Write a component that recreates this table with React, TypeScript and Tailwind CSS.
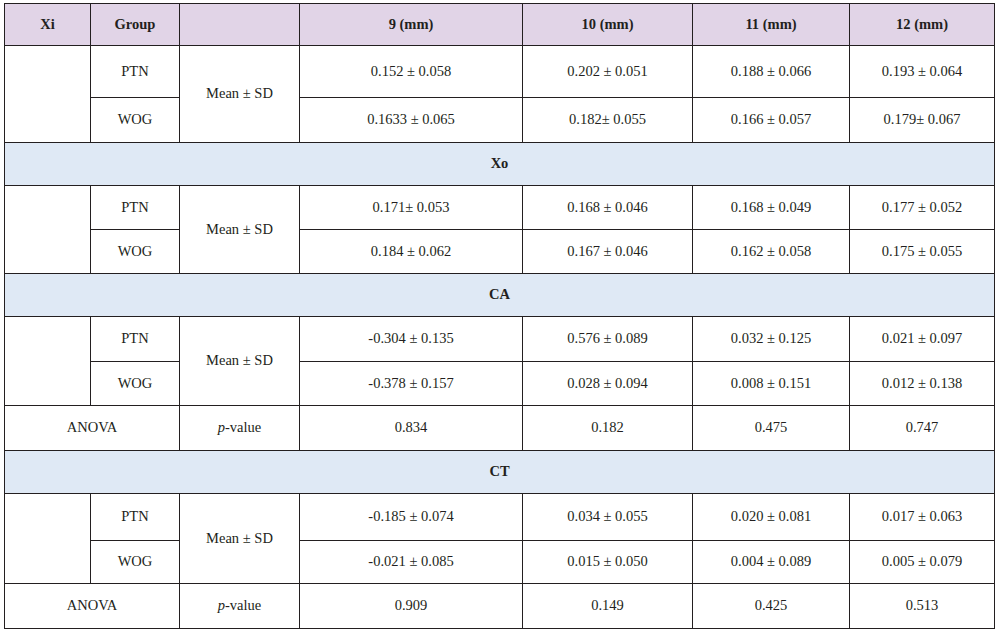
const cols = [86, 89, 120, 223, 170, 157, 145]

type Pair = { ptn: string[]; wog: string[] }

const sections: { title: string; data: Pair; anova?: string[]; h: [string, string] }[] = [
  {
    title: '',
    data: {
      ptn: ['0.152 ± 0.058', '0.202 ± 0.051', '0.188 ± 0.066', '0.193 ± 0.064'],
      wog: ['0.1633 ± 0.065', '0.182± 0.055', '0.166 ± 0.057', '0.179± 0.067'],
    },
    h: ['h-[52px]', 'h-[45px]'],
  },
  {
    title: 'Xo',
    data: {
      ptn: ['0.171± 0.053', '0.168 ± 0.046', '0.168 ± 0.049', '0.177 ± 0.052'],
      wog: ['0.184 ± 0.062', '0.167 ± 0.046', '0.162 ± 0.058', '0.175 ± 0.055'],
    },
    h: ['h-[44px]', 'h-[44px]'],
  },
  {
    title: 'CA',
    data: {
      ptn: ['-0.304 ± 0.135', '0.576 ± 0.089', '0.032 ± 0.125', '0.021 ± 0.097'],
      wog: ['-0.378 ± 0.157', '0.028 ± 0.094', '0.008 ± 0.151', '0.012 ± 0.138'],
    },
    anova: ['0.834', '0.182', '0.475', '0.747'],
    h: ['h-[45px]', 'h-[44px]'],
  },
  {
    title: 'CT',
    data: {
      ptn: ['-0.185 ± 0.074', '0.034 ± 0.055', '0.020 ± 0.081', '0.017 ± 0.063'],
      wog: ['-0.021 ± 0.085', '0.015 ± 0.050', '0.004 ± 0.089', '0.005 ± 0.079'],
    },
    anova: ['0.909', '0.149', '0.425', '0.513'],
    h: ['h-[47px]', 'h-[43px]'],
  },
]

const td =
  "border border-[#231f20] text-center align-middle p-0 [font-family:'Liberation_Serif',serif] text-[14.5px] text-[#231f20]"

export default function App() {
  return (
    <div className="w-[999px] h-[632px] bg-white pl-[4px] pt-[3px] [font-family:'Liberation_Serif',serif] text-[14.5px] text-[#231f20]">
      <table className="table-fixed border-collapse w-[991px] [font-family:'Liberation_Serif',serif]">
        <colgroup>
          {cols.map((w, i) => (
            <col key={i} style={{ width: w }} />
          ))}
        </colgroup>
        <thead>
          <tr className="h-[42px] bg-[#e1d4e7]">
            <th className={td + ' font-bold'}>Xi</th>
            <th className={td + ' font-bold'}>Group</th>
            <th className={td}></th>
            <th className={td + ' font-bold'}>9 (mm)</th>
            <th className={td + ' font-bold'}>10 (mm)</th>
            <th className={td + ' font-bold'}>11 (mm)</th>
            <th className={td + ' font-bold'}>12 (mm)</th>
          </tr>
        </thead>
        <tbody>
          {sections.map((s) => (
            <Section key={s.title || 'xi'} {...s} />
          ))}
        </tbody>
      </table>
    </div>
  )
}

function Section({
  title,
  data,
  anova,
  h,
}: {
  title: string
  data: Pair
  anova?: string[]
  h: [string, string]
}) {
  return (
    <>
      {title && (
        <tr className="h-[43px] bg-[#dfe9f5]">
          <td colSpan={7} className={td + ' font-bold'}>
            {title}
          </td>
        </tr>
      )}
      <tr className={h[0]}>
        <td rowSpan={2} className={td}></td>
        <td className={td}>PTN</td>
        <td rowSpan={2} className={td}>
          Mean ± SD
        </td>
        {data.ptn.map((v, i) => (
          <td key={i} className={td}>
            {v}
          </td>
        ))}
      </tr>
      <tr className={h[1]}>
        <td className={td}>WOG</td>
        {data.wog.map((v, i) => (
          <td key={i} className={td}>
            {v}
          </td>
        ))}
      </tr>
      {anova && (
        <tr className="h-[45px]">
          <td colSpan={2} className={td}>
            ANOVA
          </td>
          <td className={td}>
            <i>p</i>-value
          </td>
          {anova.map((v, i) => (
            <td key={i} className={td}>
              {v}
            </td>
          ))}
        </tr>
      )}
    </>
  )
}
